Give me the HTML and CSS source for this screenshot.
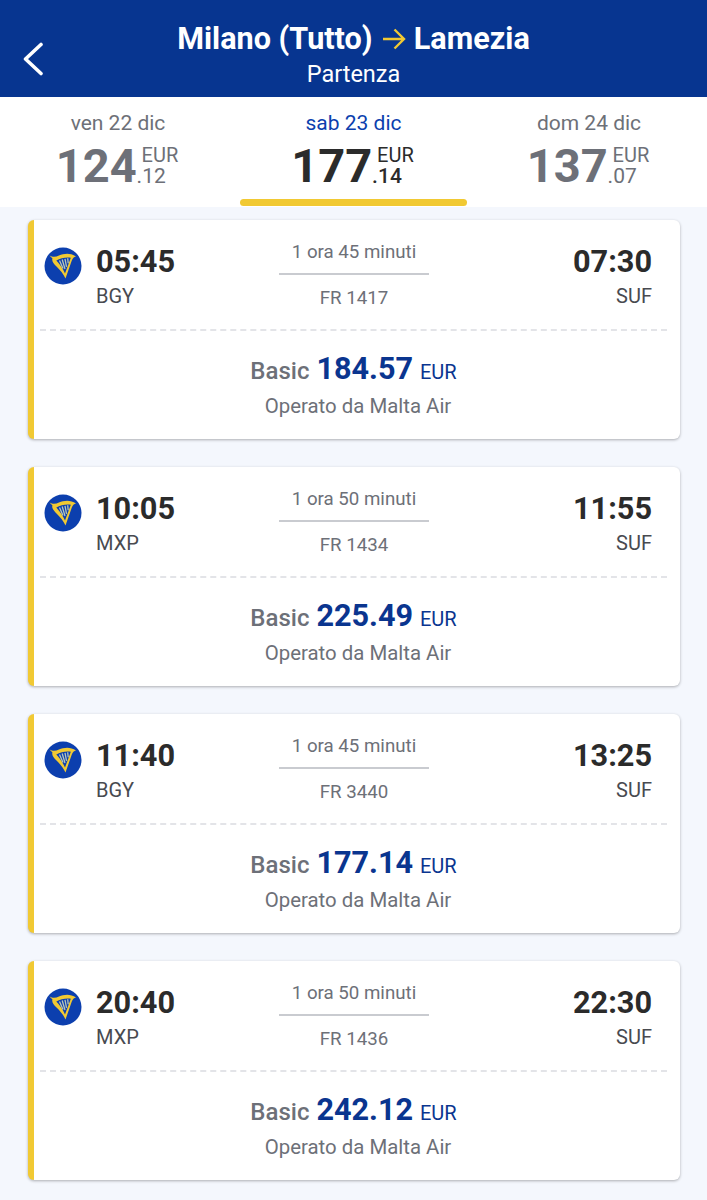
FILE: index.html
```html
<!DOCTYPE html>
<html lang="it">
<head>
<meta charset="utf-8">
<title>Milano - Lamezia</title>
<link rel="stylesheet" href="styles.css">
</head>
<body>
<svg class="defs" width="0" height="0" aria-hidden="true">
  <symbol id="harp" viewBox="0 0 38 38">
    <circle cx="19" cy="19" r="18.5" fill="#0c3fae"/>
    <path fill-rule="evenodd" d="M5.500 8.500C9 10.500 12 9.800 15 8.500 20 6.300 26.500 5.500 32 9.500 29.800 9.800 28.800 11.500 27.800 13.500L21.500 31.500C19.500 27 16 22.800 12.500 19.500 10 17 7.300 13.500 8.500 11.500ZM12.300 13.600C16 17.500 19 22 21 26.500L26.800 10.800C22 10 16.500 11.300 12.300 13.600Z" fill="#f1c933"/>
    <path d="M15.500 13.500 19 21.500M18.200 12.500l2.800 9.500M21 11.800l1.500 8M23.700 11.300l.5 5" stroke="#b9c6b8" stroke-width="1.300" fill="none"/>
  </symbol>
</svg>
<header class="topbar">
  <svg class="back" viewBox="0 0 22 34" aria-hidden="true"><path d="M19 2.500 3.500 17 19 31.500" fill="none" stroke="#fff" stroke-width="3.600" stroke-linecap="round" stroke-linejoin="round"/></svg>
  <h1 class="route">Milano (Tutto)
    <svg class="route-arrow" viewBox="0 0 24 22" aria-hidden="true"><path d="M1 11h21M12.500 1.500 22 11l-9.500 9.500" fill="none" stroke="#f1c933" stroke-width="2.400"/></svg>
    Lamezia</h1>
  <div class="leg">Partenza</div>
</header>
<nav class="dates">
  <div class="date">
    <div class="date-label">ven 22 dic</div>
    <div class="fare"><span class="fare-int">124</span><span class="fare-side"><span class="fare-cur">EUR</span><span class="cents">.12</span></span></div>
  </div>
  <div class="date date-on">
    <div class="date-label">sab 23 dic</div>
    <div class="fare"><span class="fare-int">177</span><span class="fare-side"><span class="fare-cur">EUR</span><span class="cents">.14</span></span></div>
  </div>
  <div class="date">
    <div class="date-label">dom 24 dic</div>
    <div class="fare"><span class="fare-int">137</span><span class="fare-side"><span class="fare-cur">EUR</span><span class="cents">.07</span></span></div>
  </div>
</nav>
<main class="list">
  <article class="card">
    <div class="flight">
      <svg class="logo" aria-hidden="true"><use href="#harp"/></svg>
      <div class="stop"><div class="time">05:45</div><div class="code">BGY</div></div>
      <div class="mid"><div class="dur">1 ora 45 minuti</div><div class="num">FR 1417</div></div>
      <div class="stop stop-end"><div class="time">07:30</div><div class="code">SUF</div></div>
    </div>
    <div class="price-box">
      <div class="price"><span class="tier">Basic</span> <span class="amount">184.57</span> <span class="cur">EUR</span></div>
      <div class="op">Operato da Malta Air</div>
    </div>
  </article>
  <article class="card">
    <div class="flight">
      <svg class="logo" aria-hidden="true"><use href="#harp"/></svg>
      <div class="stop"><div class="time">10:05</div><div class="code">MXP</div></div>
      <div class="mid"><div class="dur">1 ora 50 minuti</div><div class="num">FR 1434</div></div>
      <div class="stop stop-end"><div class="time">11:55</div><div class="code">SUF</div></div>
    </div>
    <div class="price-box">
      <div class="price"><span class="tier">Basic</span> <span class="amount">225.49</span> <span class="cur">EUR</span></div>
      <div class="op">Operato da Malta Air</div>
    </div>
  </article>
  <article class="card">
    <div class="flight">
      <svg class="logo" aria-hidden="true"><use href="#harp"/></svg>
      <div class="stop"><div class="time">11:40</div><div class="code">BGY</div></div>
      <div class="mid"><div class="dur">1 ora 45 minuti</div><div class="num">FR 3440</div></div>
      <div class="stop stop-end"><div class="time">13:25</div><div class="code">SUF</div></div>
    </div>
    <div class="price-box">
      <div class="price"><span class="tier">Basic</span> <span class="amount">177.14</span> <span class="cur">EUR</span></div>
      <div class="op">Operato da Malta Air</div>
    </div>
  </article>
  <article class="card">
    <div class="flight">
      <svg class="logo" aria-hidden="true"><use href="#harp"/></svg>
      <div class="stop"><div class="time">20:40</div><div class="code">MXP</div></div>
      <div class="mid"><div class="dur">1 ora 50 minuti</div><div class="num">FR 1436</div></div>
      <div class="stop stop-end"><div class="time">22:30</div><div class="code">SUF</div></div>
    </div>
    <div class="price-box">
      <div class="price"><span class="tier">Basic</span> <span class="amount">242.12</span> <span class="cur">EUR</span></div>
      <div class="op">Operato da Malta Air</div>
    </div>
  </article>
</main>
</body>
</html>
```
FILE: styles.css
```css
* { box-sizing: border-box; }
html, body { margin: 0; padding: 0; }
body {
  height: 1200px;
  overflow: hidden;
  background: #f4f7fd;
  font-family: Roboto, "Noto Sans", sans-serif;
  color: #2b2b2b;
}
.defs { position: absolute; }
.topbar {
  position: relative;
  height: 97px;
  background: #073590;
  color: #fff;
  text-align: center;
  padding-top: 21px;
}
.back { position: absolute; left: 22px; top: 42px; width: 22px; height: 34px; }
.route {
  margin: 0;
  font-size: 30.600px;
  line-height: 36px;
  font-weight: 700;
}
.route-arrow { width: 24px; height: 22px; vertical-align: -1px; margin: 0 0 0 2px; }
.leg { font-size: 23.500px; line-height: 27px; margin-top: 4px; }
.dates {
  display: grid;
  grid-template-columns: 236px 1fr 236px;
  height: 110px;
  background: #fff;
  text-align: center;
}
.date { position: relative; padding-top: 14px; color: #6d7078; }
.date-label { font-size: 21px; line-height: 24px; }
.date-on { color: #2b2b2b; }
.date-on .date-label { color: #0c3fae; }
.date-on::after {
  content: "";
  position: absolute;
  left: 4px; right: 4px; bottom: 1px;
  height: 7px;
  border-radius: 4px;
  background: #f1c933;
}
.fare { display: flex; justify-content: center; margin-top: 6px; padding-right: 2px; }
.fare-int { font-size: 47px; line-height: 50px; font-weight: 700; }
.fare-side {
  display: flex;
  flex-direction: column;
  align-items: flex-start;
  font-size: 20px;
  line-height: 21px;
  padding-top: 4px;
}
.fare-cur { margin-left: 5px; }
.cents { font-size: 21px; font-weight: 400; }
.date-on .cents { font-weight: 500; }
.list {
  display: flex;
  flex-direction: column;
  gap: 28px;
  padding: 13px 27px 0 28px;
}
.card {
  height: 219px;
  background: #fff;
  border-left: 6px solid #f1c933;
  border-radius: 6px;
  box-shadow: 0 1px 3px rgba(0,0,0,.3);
  padding: 0 13px 0 6px;
}
.flight {
  display: flex;
  height: 111px;
  padding: 24px 15px 0 5px;
  border-bottom: 2px dashed #e3e4e8;
}
.logo { width: 38px; height: 38px; margin-top: 3px; flex: none; margin-left: -1px; }
.stop { width: 110px; margin-left: 14px; }
.stop-end { width: 150px; margin-left: 0; text-align: right; }
.time { font-size: 30.700px; line-height: 36px; font-weight: 700; }
.code { font-size: 20px; line-height: 24px; color: #484a50; margin-top: 4px; }
.mid { flex: 1; text-align: center; color: #6d7078; }
.dur {
  width: 150px;
  margin: -4px auto 0;
  padding-bottom: 9px;
  border-bottom: 2px solid #c9cbd0;
  font-size: 18.700px;
  line-height: 24px;
}
.num { font-size: 18.700px; line-height: 24px; margin-top: 11px; }
.price-box { text-align: center; padding-top: 20px; }
.price { line-height: 36px; color: #0a358f; }
.tier { font-size: 24px; font-weight: 500; color: #6d7078; }
.amount { font-size: 30.600px; font-weight: 700; margin: 0 3px; }
.cur { font-size: 20px; }
.op { font-size: 20.400px; line-height: 24px; color: #6d7078; margin-top: 2px; padding-left: 9px; }
```
